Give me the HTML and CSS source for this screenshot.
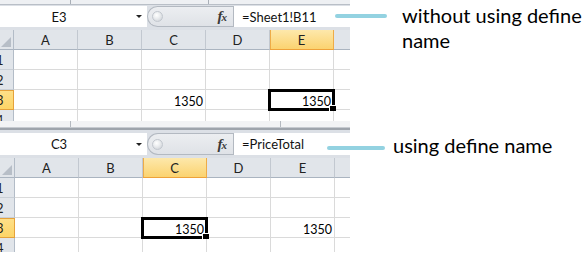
FILE: index.html
```html
<!DOCTYPE html>
<html>
<head>
<meta charset="utf-8">
<link rel="stylesheet" href="styles.css">
</head>
<body>
<div class="page">
  <section class="sheet sheet-a">
    <div class="topstrip"><span class="tick t1"></span><span class="tick t2"></span></div>
    <div class="fbar">
      <div class="namebox"><span class="ref">E3</span><span class="caret"></span></div>
      <div class="fxzone"><span class="knob"></span><span class="fx"><i>f</i><i class="x">x</i></span></div>
      <div class="formula">=Sheet1!B11</div>
    </div>
    <div class="gridwrap">
      <div class="grid">
        <div class="corner"></div>
        <div class="ch">A</div><div class="ch">B</div><div class="ch">C</div><div class="ch">D</div><div class="ch sel">E</div><div class="ch"></div>
        <div class="rh">1</div><div class="c"></div><div class="c"></div><div class="c"></div><div class="c"></div><div class="c"></div><div class="c"></div>
        <div class="rh">2</div><div class="c"></div><div class="c"></div><div class="c"></div><div class="c"></div><div class="c"></div><div class="c"></div>
        <div class="rh sel">3</div><div class="c"></div><div class="c"></div><div class="c">1350</div><div class="c"></div><div class="c active">1350</div><div class="c"></div>
        <div class="rh">4</div><div class="c"></div><div class="c"></div><div class="c"></div><div class="c"></div><div class="c"></div><div class="c"></div>
      </div>
    </div>
    <div class="bottomstrip"><span class="tick b1"></span><span class="tick b2"></span></div>
  </section>

  <section class="sheet sheet-b">
    <div class="fbar">
      <div class="namebox"><span class="ref">C3</span><span class="caret"></span></div>
      <div class="fxzone"><span class="knob"></span><span class="fx"><i>f</i><i class="x">x</i></span></div>
      <div class="formula">=PriceTotal</div>
    </div>
    <div class="gridwrap">
      <div class="grid">
        <div class="corner"></div>
        <div class="ch">A</div><div class="ch">B</div><div class="ch sel">C</div><div class="ch">D</div><div class="ch">E</div><div class="ch"></div>
        <div class="rh">1</div><div class="c"></div><div class="c"></div><div class="c"></div><div class="c"></div><div class="c"></div><div class="c"></div>
        <div class="rh">2</div><div class="c"></div><div class="c"></div><div class="c"></div><div class="c"></div><div class="c"></div><div class="c"></div>
        <div class="rh sel">3</div><div class="c"></div><div class="c"></div><div class="c active">1350</div><div class="c"></div><div class="c">1350</div><div class="c"></div>
        <div class="rh">4</div><div class="c"></div><div class="c"></div><div class="c"></div><div class="c"></div><div class="c"></div><div class="c"></div>
      </div>
    </div>
  </section>

  <div class="note note-a"><span class="lead"></span><p>without using define<br>name</p></div>
  <div class="note note-b"><span class="lead"></span><p>using define name</p></div>
</div>
</body>
</html>
```
FILE: styles.css
```css
* { box-sizing: border-box; margin: 0; padding: 0; }
html, body { background: #fff; }
body {
  width: 586px;
  height: 278px;
  overflow: hidden;
  font-family: Lato, "Open Sans", sans-serif;
  color: #000;
}
.page { position: relative; width: 586px; height: 278px; }

.sheet { width: 350px; overflow: hidden; background: #dce0e6; }
.sheet-a { height: 130px; }
.sheet-b { height: 122px; }

.topstrip {
  display: flex;
  height: 5px;
  background: #eef0f3;
  border-bottom: 1px solid #b9bfc7;
}
.tick { flex: none; width: 1px; height: 100%; background: #a9afb7; }
.t1 { margin-left: 70px; }
.t2 { margin-left: 137px; }

.fbar {
  display: flex;
  height: 25px;
  padding: 1px 0 3px;
  background: #dce0e6;
}
.sheet-b .fbar { height: 28px; padding: 3px 0 3px; }

.namebox {
  flex: none;
  width: 147px;
  display: flex;
  align-items: center;
  background: #fff;
  font-size: 13px;
}
.ref { flex: none; width: 118px; text-align: center; color: #111; }
.caret {
  flex: none;
  margin-left: 18px;
  width: 0; height: 0;
  border-left: 3px solid transparent;
  border-right: 3px solid transparent;
  border-top: 3px solid #222;
}

.fxzone {
  flex: none;
  width: 86px;
  display: flex;
  align-items: center;
  padding-left: 4px;
  background: linear-gradient(#eceef1, #dfe2e7);
  border: 1px solid #b3b9c1;
  border-right: none;
  border-radius: 11px 0 0 11px;
}
.knob {
  flex: none;
  width: 11px; height: 11px;
  border-radius: 50%;
  border: 1px solid #c2c7ce;
  background: radial-gradient(circle at 40% 35%, #ffffff 0, #eef0f2 35%, #c9cdd3 100%);
}
.fx {
  margin-left: auto;
  margin-right: 7px;
  font-family: "Liberation Serif", "DejaVu Serif", serif;
  font-size: 15px;
  font-weight: bold;
  color: #3a3a3a;
  letter-spacing: -1px;
}
.fx .x { font-size: 11px; }

.formula {
  flex: 1;
  display: flex;
  align-items: center;
  padding-left: 8px;
  background: #fff;
  border-left: 1px solid #b3b9c1;
  font-size: 13px;
  color: #111;
  white-space: nowrap;
}

.gridwrap { height: 91px; overflow: hidden; background: #fff; }
.sheet-b .gridwrap { height: 94px; }

.grid {
  display: grid;
  grid-template-columns: 14px repeat(6, 64px);
  grid-auto-rows: 20px;
}
.sheet-b .grid { grid-template-columns: 15px repeat(6, 64px); }

.corner {
  position: relative;
  background: #e1e5ea;
  border-right: 1px solid #b3bcc7;
  border-bottom: 1px solid #aab4c0;
}
.corner::after {
  content: "";
  position: absolute;
  right: 2px; bottom: 2px;
  width: 10px; height: 10px;
  background: #b7bec7;
  clip-path: polygon(100% 0, 100% 100%, 0 100%);
}

.ch {
  background: #e1e5ea;
  border-right: 1px solid #c2c8d0;
  border-bottom: 1px solid #aab4c0;
  text-align: center;
  font-size: 13px;
  line-height: 20px;
  color: #222;
}
.ch.sel {
  background: linear-gradient(#fde8ab, #fbd370);
  border-right-color: #eeac48;
  border-bottom-color: #eea23a;
  box-shadow: inset 1px 0 0 #eeac48;
}

.rh {
  overflow: hidden;
  white-space: nowrap;
  background: #e1e5ea;
  border-right: 1px solid #b3bcc7;
  border-bottom: 1px solid #c9cfd6;
  text-indent: -4px;
  font-size: 13px;
  line-height: 20px;
  color: #222;
}
.rh.sel {
  background: linear-gradient(#fee08a, #fdd567);
  border-right-color: #e5a23b;
  border-bottom-color: #e5a23b;
  box-shadow: inset 0 1px 0 #e5a23b;
}

.c {
  border-right: 1px solid #dadada;
  border-bottom: 1px solid #dadada;
  text-align: right;
  padding: 4px 2px 0 0;
  font-size: 12.5px;
  line-height: 15px;
  color: #000;
}
.c.active { position: relative; }
.c.active::before {
  content: "";
  position: absolute;
  top: -1px; left: -2px; right: -2px; bottom: -2px;
  border: 3px solid #000;
  z-index: 1;
}
.c.active::after {
  content: "";
  position: absolute;
  right: -3px; bottom: -2px;
  width: 6px; height: 5px;
  background: #000;
  border-left: 1px solid #fff;
  border-top: 1px solid #fff;
  z-index: 2;
}

.bottomstrip {
  display: flex;
  height: 9px;
  background: linear-gradient(#f2f3f5 0, #f2f3f5 6px, #c6cad0 6px, #c6cad0 7px, #9ea4ac 7px);
}
.bottomstrip .tick { height: 6px; background: #b4b9c0; }
.b1 { margin-left: 70px; }
.b2 { margin-left: 209px; }

.note {
  position: absolute;
  display: flex;
  align-items: flex-start;
}
.note-a { left: 335px; top: 3px; }
.note-b { left: 327px; top: 133px; }
.lead {
  flex: none;
  height: 4px;
  border-radius: 2px;
  background: #93d2e1;
}
.note-a .lead { width: 52px; margin-top: 11px; }
.note-b .lead { width: 58px; margin-top: 13px; }
.note p {
  font-size: 20px;
  line-height: 25px;
  color: #000;
  white-space: nowrap;
}
.note-a p { margin-left: 15px; }
.note-b p { margin-left: 8px; }
```
